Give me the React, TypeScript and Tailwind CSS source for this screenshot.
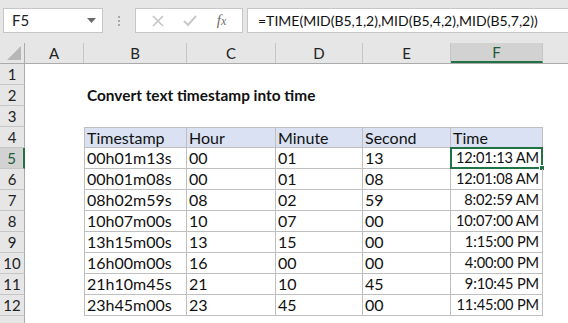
import React from "react";

const colWidths = ["w-[59px]", "w-[103px]", "w-[89px]", "w-[87px]", "w-[88px]", "w-[92px]"];
const letters = ["A", "B", "C", "D", "E", "F"];

const header = ["Timestamp", "Hour", "Minute", "Second", "Time"];
const rows: string[][] = [
  ["00h01m13s", "00", "01", "13", "12:01:13 AM"],
  ["00h01m08s", "00", "01", "08", "12:01:08 AM"],
  ["08h02m59s", "08", "02", "59", "8:02:59 AM"],
  ["10h07m00s", "10", "07", "00", "10:07:00 AM"],
  ["13h15m00s", "13", "15", "00", "1:15:00 PM"],
  ["16h00m00s", "16", "00", "00", "4:00:00 PM"],
  ["21h10m45s", "21", "10", "45", "9:10:45 PM"],
  ["23h45m00s", "23", "45", "00", "11:45:00 PM"],
];

function FormulaBar() {
  return (
    <div className="h-[43px] bg-[#e6e6e6] flex items-start pt-[8px] pl-[3px]">
      <div className="w-[100px] h-[25px] bg-white border border-[#c6c6c6] flex items-center justify-between pl-[8px] pr-[6px] text-[15px] text-[#222]">
        <span>F5</span>
        <svg width="9" height="5" viewBox="0 0 9 5">
          <path d="M0 0 L9 0 L4.5 5 Z" fill="#6b6b6b" />
        </svg>
      </div>
      <div className="w-[32px] h-[25px] flex flex-col items-center justify-center gap-[2px]">
        <span className="w-[2px] h-[2px] bg-[#a8a8a8]" />
        <span className="w-[2px] h-[2px] bg-[#a8a8a8]" />
        <span className="w-[2px] h-[2px] bg-[#a8a8a8]" />
      </div>
      <div className="w-[108px] h-[25px] bg-white border border-[#c6c6c6] flex items-center justify-around px-[6px]">
        <svg width="12" height="12" viewBox="0 0 12 12">
          <path d="M1 1 L11 11 M11 1 L1 11" stroke="#c4c4c4" strokeWidth="1.6" />
        </svg>
        <svg width="14" height="12" viewBox="0 0 14 12">
          <path d="M1 6 L5 10 L13 1" stroke="#c8c8c8" strokeWidth="2" fill="none" />
        </svg>
        <span className="font-['Liberation_Serif',serif] italic text-[15px] text-[#6e6e6e] leading-none">
          f<span className="text-[12px]">x</span>
        </span>
      </div>
      <div className="ml-[4px] flex-1 h-[25px] bg-white border border-[#c6c6c6] border-r-0 flex items-center pl-[10px] text-[14px] text-[#111] whitespace-nowrap overflow-hidden">
        =TIME(MID(B5,1,2),MID(B5,4,2),MID(B5,7,2))
      </div>
    </div>
  );
}

function ColumnHeader() {
  return (
    <div className="flex h-[21px] bg-[#e6e6e6] border-b border-[#ababab]">
      <div className="w-[25px] shrink-0 border-r border-[#ababab] flex items-end justify-end pr-[3px] pb-[3px]">
        <svg width="14" height="14" viewBox="0 0 14 14">
          <path d="M14 0 L14 14 L0 14 Z" fill="#b7b7b7" />
        </svg>
      </div>
      {letters.map((l, i) => (
        <div
          key={l}
          className={
            colWidths[i] +
            " shrink-0 border-r border-[#c6c6c6] flex items-center justify-center text-[15px] " +
            (l === "F" ? "bg-[#d2d2d2] border-b-2 border-b-[#217346] text-[#1d5c3a]" : "text-[#222]")
          }
        >
          {l}
        </div>
      ))}
      <div className="flex-1" />
    </div>
  );
}

function RowHeader({ n }: { n: number }) {
  const sel = n === 5;
  return (
    <div
      className={
        "w-[25px] shrink-0 border-b border-[#c6c6c6] flex items-center justify-center text-[15px] " +
        (sel ? "bg-[#d2d2d2] border-r-2 border-r-[#217346] text-[#1d5c3a]" : "bg-[#e6e6e6] border-r border-r-[#ababab] text-[#222]")
      }
    >
      {n}
    </div>
  );
}

function Cell({ col, children, first, top, right, selected, bg }: {
  col: number;
  children?: React.ReactNode;
  first?: boolean;
  top?: boolean;
  right?: boolean;
  selected?: boolean;
  bg?: boolean;
}) {
  return (
    <div
      className={
        colWidths[col] +
        " shrink-0 relative flex items-center whitespace-nowrap border-r border-b border-[#bfbfbf] text-[#111] " +
        (first ? "border-l " : "") +
        (top ? "border-t " : "") +
        (right ? "justify-end pr-[3px] text-[14.6px] tracking-[-0.15px] " : "pl-[2px] text-[16px] ") +
        (bg ? "bg-[#d9e1f2]" : "")
      }
    >
      {children}
      {selected && (
        <div className="absolute -left-px -top-px -right-px -bottom-px border-2 border-[#217346]">
          <div className="absolute -right-[4px] -bottom-[4px] w-[6px] h-[6px] bg-[#217346] border border-white" />
        </div>
      )}
    </div>
  );
}

function SheetRow({ n, children }: { n: number; children?: React.ReactNode }) {
  return (
    <div className="flex h-[21px]">
      <RowHeader n={n} />
      {children}
    </div>
  );
}

export default function App() {
  return (
    <div className="w-[568px] h-[323px] overflow-hidden bg-white font-['Lato',sans-serif]">
      <FormulaBar />
      <ColumnHeader />
      <SheetRow n={1} />
      <SheetRow n={2}>
        <div className="w-[59px] shrink-0" />
        <div className="pl-[3px] flex items-center text-[15.4px] font-bold text-[#111] whitespace-nowrap">
          Convert text timestamp into time
        </div>
      </SheetRow>
      <SheetRow n={3} />
      <SheetRow n={4}>
        <div className="w-[59px] shrink-0" />
        {header.map((h, i) => (
          <Cell key={h} col={i + 1} first={i === 0} top bg>
            {h}
          </Cell>
        ))}
      </SheetRow>
      {rows.map((r, ri) => (
        <SheetRow key={ri} n={ri + 5}>
          <div className="w-[59px] shrink-0" />
          {r.map((v, ci) => (
            <Cell key={ci} col={ci + 1} first={ci === 0} right={ci === 4} selected={ri === 0 && ci === 4}>
              {v}
            </Cell>
          ))}
        </SheetRow>
      ))}
      <div className="flex h-[21px]">
        <div className="w-[25px] shrink-0 bg-[#e6e6e6] border-r border-[#ababab]" />
      </div>
    </div>
  );
}
